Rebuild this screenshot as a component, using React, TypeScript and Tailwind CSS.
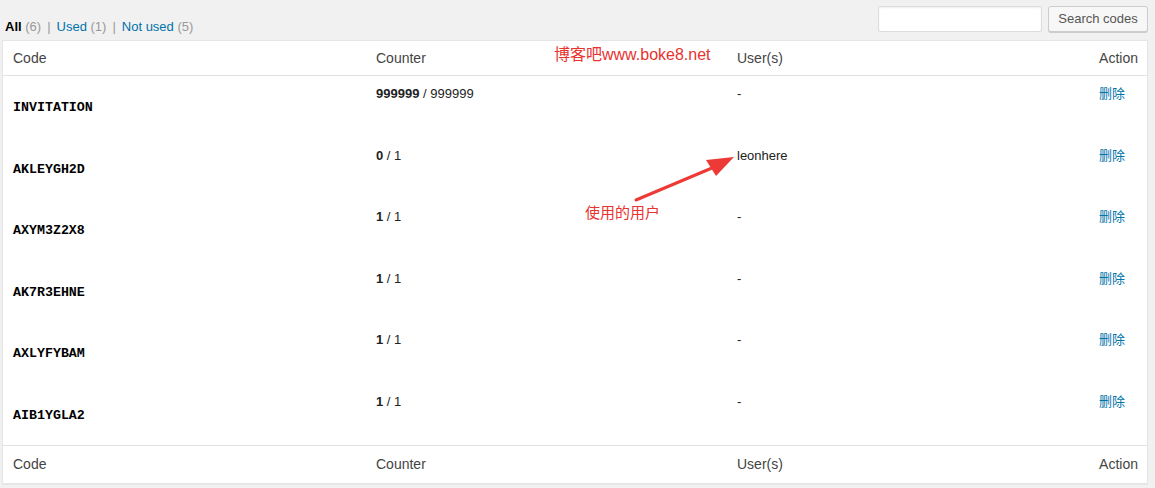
import React from "react";

type Row = { code: string; used: string; total: string; user: string };

const rows: Row[] = [
  { code: "INVITATION", used: "999999", total: "999999", user: "-" },
  { code: "AKLEYGH2D", used: "0", total: "1", user: "leonhere" },
  { code: "AXYM3Z2X8", used: "1", total: "1", user: "-" },
  { code: "AK7R3EHNE", used: "1", total: "1", user: "-" },
  { code: "AXLYFYBAM", used: "1", total: "1", user: "-" },
  { code: "AIB1YGLA2", used: "1", total: "1", user: "-" },
];

const sans = "font-['Liberation_Sans','Noto_Sans_CJK_SC',Arial,sans-serif]";

function HeadRow({ top }: { top?: boolean }) {
  return (
    <div
      className={`flex items-center text-[14px] text-[#444] ${
        top ? "h-[35px] border-b border-[#e1e1e1]" : "h-[38px] border-t border-[#e1e1e1]"
      }`}
    >
      <div className="w-[363px] pl-[10px]">Code</div>
      <div className="w-[361px] pl-[10px]">Counter</div>
      <div className="flex-1 pl-[10px]">User(s)</div>
      <div className="pr-[9px]">Action</div>
    </div>
  );
}

export default function App() {
  return (
    <div className={`relative h-[488px] w-[1155px] overflow-hidden bg-[#f1f1f1] pl-[2px] pr-[7px] ${sans}`}>
      <div className="flex h-[40px] items-start justify-between">
        <div className="mt-[18px] pl-[3px] text-[13px] leading-[18px] text-[#555]">
          <span className="font-bold text-black">All</span> <span className="text-[#999]">(6)</span>
          <span className="mx-[6px] text-[#999]">|</span>
          <span className="text-[#0073aa]">Used</span> <span className="text-[#999]">(1)</span>
          <span className="mx-[6px] text-[#999]">|</span>
          <span className="text-[#0073aa]">Not used</span> <span className="text-[#999]">(5)</span>
        </div>
        <div className="mt-[6px] flex gap-[6px]">
          <input
            className="h-[26px] w-[164px] rounded-[2px] border border-[#ddd] bg-white shadow-[inset_0_1px_2px_rgba(0,0,0,0.07)]"
          />
          <button className="h-[26px] w-[100px] rounded-[3px] border border-[#ccc] bg-[#f7f7f7] text-[13px] text-[#555] shadow-[0_1px_0_#ccc]">
            Search codes
          </button>
        </div>
      </div>

      <div className="border border-[#e5e5e5] bg-white shadow-[0_1px_1px_rgba(0,0,0,0.04)]">
        <HeadRow top />
        {rows.map((r) => (
          <div key={r.code} className="flex h-[61.5px] text-[13px] text-[#32373c]">
            <div className="w-[363px] pl-[10px] pt-[21px]">
              <span className="font-['Liberation_Mono',monospace] text-[13.3px] font-bold text-black">
                {r.code}
              </span>
            </div>
            <div className="w-[361px] pl-[10px] pt-[8px] text-[#222]">
              <span className="font-bold">{r.used}</span> / {r.total}
            </div>
            <div className="flex-1 pl-[10px] pt-[8px] text-[#222]">{r.user}</div>
            <div className={`pr-[22px] pt-[8px] text-[#0073aa] ${sans}`}>删除</div>
          </div>
        ))}
        <HeadRow />
      </div>

      <div className="absolute left-[554px] top-[45px] text-[16px] leading-[20px] text-[#e8332f]">
        博客吧www.boke8.net
      </div>
      <div className="absolute left-[585px] top-[203px] text-[15px] leading-[20px] text-[#e8332f]">
        使用的用户
      </div>
      <svg className="absolute left-0 top-0" width="1155" height="488">
        <path d="M636 200 L712 168" stroke="#ee3a36" strokeWidth="3" strokeLinecap="round" />
        <path d="M734 157 L706 160 L716 176 Z" fill="#ee3a36" />
      </svg>
    </div>
  );
}
